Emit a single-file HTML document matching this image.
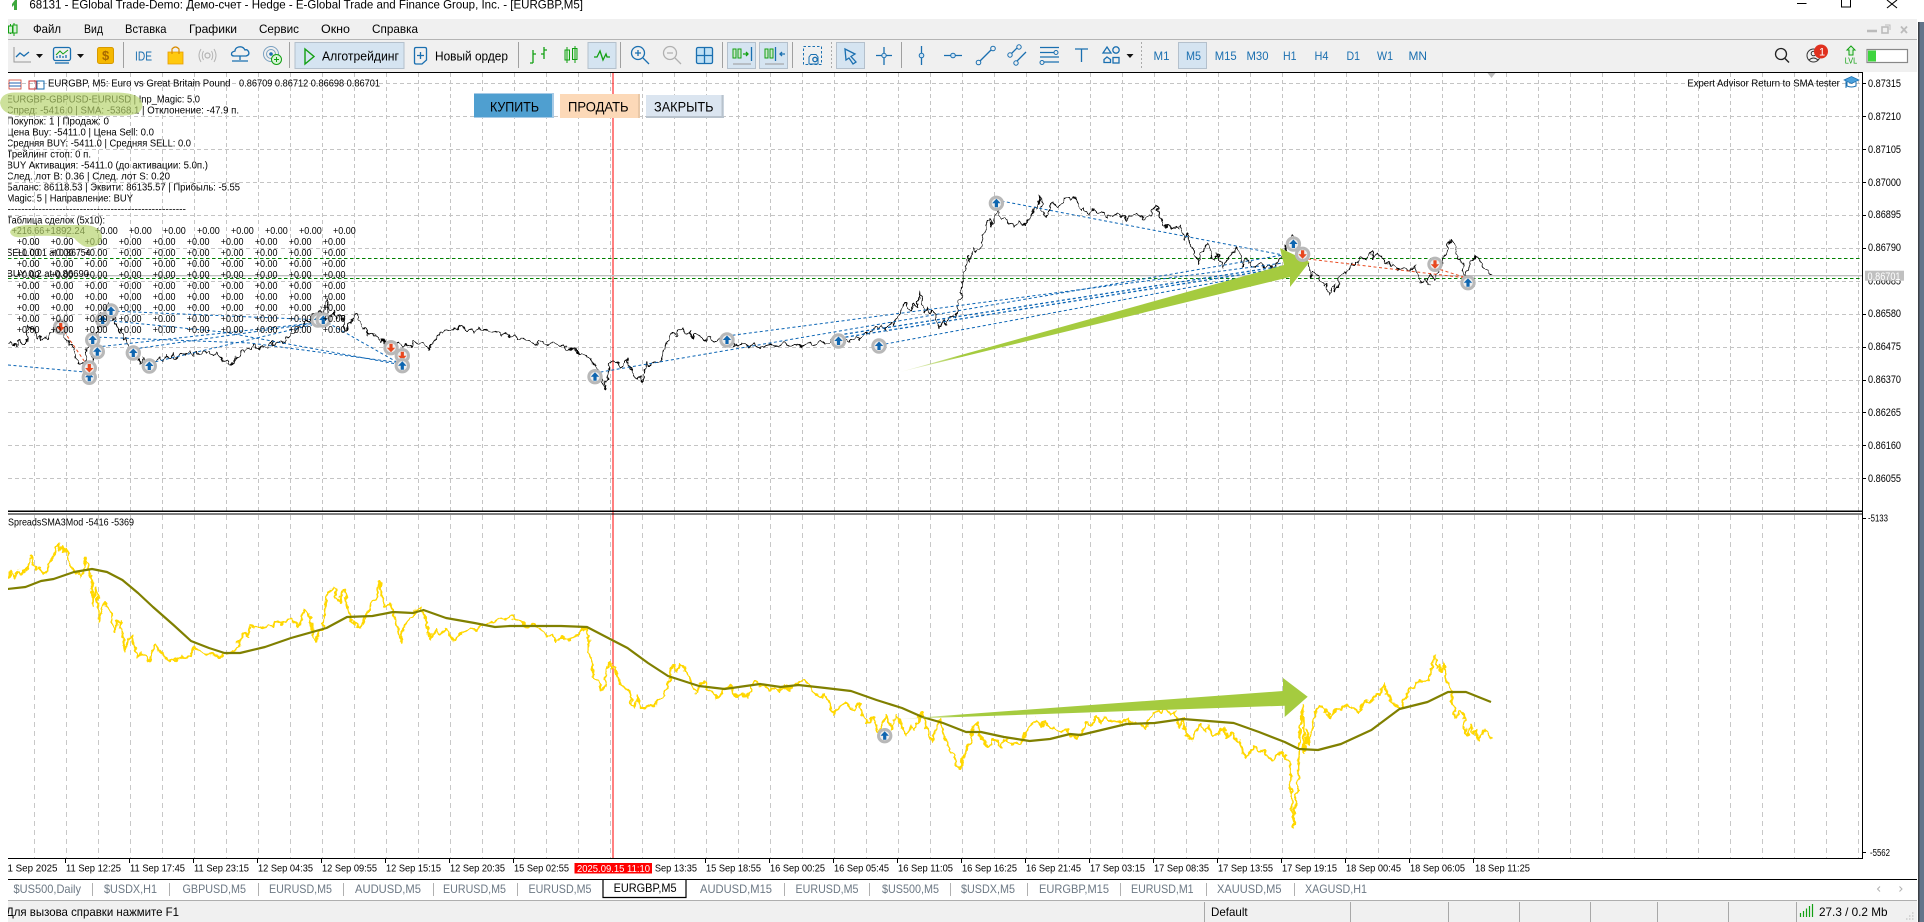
<!DOCTYPE html>
<html lang="ru"><head><meta charset="utf-8"><title>EURGBP,M5</title>
<style>
html,body{margin:0;padding:0;background:#fff;overflow:hidden}
svg{display:block}
text{font-family:"Liberation Sans","Noto Sans CJK SC",sans-serif;fill:#000}
.m text{font-size:12px}
.b text{font-size:12px;fill:#1a6fb0}
.o text{font-size:10px}
.t text{font-size:10px}
.tab text{font-size:12px;fill:#6c7884}
.ax text{font-size:11px}
.i{fill:none;stroke:#1a6fb0;stroke-width:1.3}
.g{fill:none;stroke:#12a012;stroke-width:1.3}
</style></head><body>
<svg width="1924" height="922" viewBox="0 0 1924 922" xmlns="http://www.w3.org/2000/svg">
<defs>
<pattern id="g1" x="34" y="73" width="32" height="7" patternUnits="userSpaceOnUse"><rect x="0" y="0" width="1" height="4" fill="#c4c4c4"/></pattern>
<pattern id="g2" x="34" y="515" width="32" height="9" patternUnits="userSpaceOnUse"><rect x="0" y="0" width="1" height="5" fill="#c8c8c8"/></pattern>
<clipPath id="cc"><rect x="8" y="72" width="1854" height="786"/></clipPath>
<clipPath id="cs"><rect x="8" y="900" width="400" height="22"/></clipPath>
<filter id="jit" filterUnits="userSpaceOnUse" x="0" y="70" width="1870" height="800" color-interpolation-filters="sRGB"><feTurbulence type="fractalNoise" baseFrequency=".16" numOctaves="2" seed="7" result="n"/><feDisplacementMap in="SourceGraphic" in2="n" scale="7" xChannelSelector="R" yChannelSelector="G"/></filter>
<linearGradient id="a1" gradientUnits="userSpaceOnUse" x1="900" y1="372" x2="960" y2="355"><stop offset="0" stop-color="#a5cb3f" stop-opacity=".1"/><stop offset="1" stop-color="#a5cb3f"/></linearGradient>
<linearGradient id="a2" gradientUnits="userSpaceOnUse" x1="899" y1="719" x2="960" y2="715"><stop offset="0" stop-color="#a5cb3f" stop-opacity=".1"/><stop offset="1" stop-color="#a5cb3f"/></linearGradient>
<g id="bm"><circle r="6.2" fill="#eee" stroke="#b8b8b8" stroke-width="3"/><path d="M0-4.5L4.2 0H1.6V4H-1.6V0H-4.2Z" fill="#0f66b0"/></g>
<g id="rm"><circle r="6.2" fill="#eee" stroke="#b8b8b8" stroke-width="3"/><path d="M0 4.5L4.2 0H1.6V-4H-1.6V0H-4.2Z" fill="#e8481f"/></g>
</defs>
<rect width="1924" height="922" fill="#fff"/>
<rect x="1918" y="22" width="6" height="900" fill="#63748a"/><rect x="1918" y="22" width="1.5" height="900" fill="#3b3f45"/>
<path d="M17 0V10H14V5L12 7V4L15 0Z" fill="#3da83d"/>
<text x="29.4" y="8.5" font-size="12" textLength="553.6" lengthAdjust="spacingAndGlyphs">68131 - EGlobal Trade-Demo: Демо-счет - Hedge - E-Global Trade and Finance Group, Inc. - [EURGBP,M5]</text>
<path d="M1797 3.5H1806.5" stroke="#000" fill="none"/>
<rect x="1841.5" y="-1" width="9" height="8" fill="none" stroke="#000"/>
<path d="M1887 0L1897 8M1897 0L1887 8" stroke="#000" stroke-width="1.1" fill="none"/>
<rect x="8" y="19" width="1909" height="53" fill="#f0f0f0"/>
<rect x="8" y="39" width="1909" height="1" fill="#b4b4b4"/>
<path d="M10.5 24V34M14 23V36M10.5 25.5" stroke="#12a012" fill="none"/>
<rect x="8.5" y="26" width="4" height="7" fill="#d8f0d8" stroke="#12a012"/><rect x="13" y="25" width="4" height="8" fill="#d8f0d8" stroke="#12a012"/>
<g class="m">
<text x="33" y="33" textLength="28" lengthAdjust="spacingAndGlyphs">Файл</text>
<text x="84" y="33" textLength="19" lengthAdjust="spacingAndGlyphs">Вид</text>
<text x="125" y="33" textLength="41.5" lengthAdjust="spacingAndGlyphs">Вставка</text>
<text x="189" y="33" textLength="48" lengthAdjust="spacingAndGlyphs">Графики</text>
<text x="259" y="33" textLength="40" lengthAdjust="spacingAndGlyphs">Сервис</text>
<text x="321" y="33" textLength="29" lengthAdjust="spacingAndGlyphs">Окно</text>
<text x="372" y="33" textLength="46" lengthAdjust="spacingAndGlyphs">Справка</text>
</g>
<path d="M1867 31H1877" stroke="#bbb" stroke-width="2.5"/><rect x="1882" y="27" width="6" height="6" fill="none" stroke="#bbb" stroke-width="1.6"/><path d="M1885 25H1890V30" stroke="#bbb" fill="none"/>
<path d="M1901 26.5L1907 33M1907 26.5L1901 33" stroke="#bbb" stroke-width="1.8"/>
<g fill="#d5e4f1" stroke="#b4c0cc">
<rect x="295" y="42.5" width="109" height="26"/><rect x="588" y="42.5" width="28" height="26"/><rect x="727.5" y="42.5" width="28" height="26"/><rect x="759.5" y="42.5" width="28" height="26"/><rect x="836.5" y="42.5" width="28" height="26"/><rect x="1178.5" y="42.5" width="28" height="26"/>
</g>
<path d="M123.5 42V68M289.5 42V68M518.5 42V68M620.5 42V68M722.5 42V68M792.5 42V68M901.5 42V68" stroke="#a0a0a0" fill="none"/>
<path d="M831.5 42V68M1141.5 42V68" stroke="#aaa" stroke-dasharray="2 2" fill="none"/>
<path d="M14 47V62H31" fill="none" stroke="#999"/><path d="M16 57L20 53L24 56L29 52" class="i"/>
<path d="M36 54H43L39.5 58Z" fill="#111"/>
<rect x="53.5" y="47.5" width="17" height="13" rx="2" class="i"/><path d="M56 55L60 51L63 54L68 50" stroke="#12a012" fill="none"/><path d="M57 58V56M60 58V55M63 58V56M66 58V55" class="i" stroke-width="1"/><path d="M55 63H69" class="i"/>
<path d="M77 54H84L80.5 58Z" fill="#111"/>
<rect x="97.5" y="47.5" width="16" height="16" rx="2" fill="#f5b800" stroke="#d89a00"/>
<text x="102" y="60" font-size="13" font-weight="bold" style="fill:#a86a00">$</text>
<text x="135" y="60.5" font-size="13" textLength="17" lengthAdjust="spacingAndGlyphs" style="fill:#1a6fb0">IDE</text>
<path d="M168 52H183V64H168Z" fill="#ffc90e" stroke="#e69a00" stroke-width=".8"/><path d="M172 54V49Q175.5 45 179 49V54" fill="none" stroke="#d98c00" stroke-width="1.2"/>
<circle cx="207.5" cy="55.5" r="2.5" fill="none" stroke="#b5b5b5" stroke-width="1.2"/><path d="M203.5 51Q201 55.5 203.5 60M211.5 51Q214 55.5 211.5 60M201 49Q197 55.5 201 62M214 49Q218 55.5 214 62" fill="none" stroke="#b5b5b5"/>
<path d="M234 56H246Q250 55 248.5 51.5Q247 49 245 50Q243 46 238.5 47Q235 48 235 51Q231 52 231.5 54.5Q232 56 234 56ZM240 56V60M232 61H248" class="i"/>
<circle cx="271" cy="54" r="7.5" fill="none" stroke="#7aa0c0"/><circle cx="271" cy="54" r="4.5" fill="none" stroke="#7aa0c0"/><circle cx="271" cy="54" r="1.8" fill="#1a6fb0"/>
<circle cx="276.5" cy="59.5" r="5" fill="#d8f3d8" stroke="#12a012"/><path d="M274 59.5H279M276.5 57V62" stroke="#12a012"/>
<path d="M305 49V64L314 56.5Z" fill="none" stroke="#12a012" stroke-width="1.4"/>
<text x="322" y="60.5" font-size="12.5" textLength="77" lengthAdjust="spacingAndGlyphs">Алготрейдинг</text>
<path d="M414.5 49Q414.5 47.5 416 47.5H425Q426.5 47.5 426.5 49V60L422 64H416Q414.5 64 414.5 62.5Z" class="i"/><path d="M417 55.5H424M420.5 52V59" class="i"/>
<text x="435" y="60.5" font-size="12.5" textLength="73" lengthAdjust="spacingAndGlyphs">Новый ордер</text>
<path d="M533 50V63M533 54H536M533 63H530M544 47V59M544 50H547M544 54H541" class="g"/>
<rect x="565" y="50" width="4.5" height="10" fill="#d8f0d8" stroke="#12a012"/><rect x="572.5" y="48.5" width="4.5" height="11" fill="#d8f0d8" stroke="#12a012"/><path d="M567 47V63M575 46V63" stroke="#12a012" fill="none"/>
<path d="M594 57H597L600 51L603 60L606 54L607 57H610" class="g"/>
<circle cx="638" cy="53" r="6.5" class="i"/><path d="M635 53H641M638 50V56M643 58L649 64" class="i"/>
<circle cx="670" cy="53" r="6.5" fill="none" stroke="#b0b0b0" stroke-width="1.3"/><path d="M667 53H673M675 58L681 64" fill="none" stroke="#b0b0b0" stroke-width="1.3"/>
<rect x="696.5" y="47.5" width="16" height="16" rx="1.5" fill="#bfe0f5" stroke="#1a6fb0" stroke-width="1.3"/><path d="M704.5 47.5V63.5M696.5 55.5H712.5" class="i"/>
<rect x="733" y="49" width="3" height="9" fill="#cde8cd" stroke="#12a012"/><rect x="738" y="49" width="3" height="9" fill="#cde8cd" stroke="#12a012"/><path d="M743 54H748M746 52L748 54L746 56" class="g" stroke-width="1"/><path d="M751.5 47V61" class="i"/><path d="M733 64H751" stroke="#999" fill="none"/>
<rect x="765" y="49" width="3" height="9" fill="#cde8cd" stroke="#12a012"/><rect x="770" y="49" width="3" height="9" fill="#cde8cd" stroke="#12a012"/><path d="M775.5 47V61M785 54H780M782 52L780 54L782 56" class="i" stroke-width="1"/><path d="M765 64H784" stroke="#999" fill="none"/>
<rect x="803.5" y="46.5" width="18" height="18" fill="none" stroke="#1a6fb0" stroke-dasharray="2.5 2"/><path d="M809 64V57L811 54.5H816L818 57V64Z" fill="#f0f0f0" stroke="#1a6fb0"/><circle cx="815" cy="59.5" r="2.2" class="i" stroke-width="1"/>
<path d="M845 49L855 54L851 56.5L856 62L853 64L849 58L846 60Z" class="i" fill="#e8f2fa"/>
<path d="M884 47V65M876 55.5H892" class="i"/><circle cx="884" cy="55.5" r="2.2" fill="#d5e4f1" stroke="#1a6fb0"/>
<path d="M921.5 46V65" class="i"/><circle cx="921.5" cy="55.5" r="2.3" fill="#cfe4f6" stroke="#1a6fb0"/>
<path d="M944 55.5H962" class="i"/><circle cx="953" cy="55.5" r="2.3" fill="#cfe4f6" stroke="#1a6fb0"/>
<path d="M979 62L992 49" class="i"/><circle cx="978.5" cy="62.5" r="2.3" fill="#f0f0f0" stroke="#1a6fb0"/><circle cx="993" cy="48.5" r="2.3" fill="#f0f0f0" stroke="#1a6fb0"/>
<path d="M1011 54L1018 47M1016 62L1026 52" class="i"/><circle cx="1010" cy="55" r="2.2" fill="#f0f0f0" stroke="#1a6fb0"/><circle cx="1019" cy="47" r="2.2" fill="#f0f0f0" stroke="#1a6fb0"/><circle cx="1016" cy="63" r="2.2" fill="#f0f0f0" stroke="#1a6fb0"/>
<path d="M1040 47.5H1059M1040 52.5H1054M1040 57H1059M1043 62H1059" class="i"/><circle cx="1056" cy="52.5" r="2" fill="#f0f0f0" stroke="#1a6fb0"/><circle cx="1042" cy="62.5" r="2" fill="#f0f0f0" stroke="#1a6fb0"/>
<path d="M1075 49H1088M1081.5 49V62" class="i"/>
<path d="M1107 47L1111 53H1103Z" class="i" stroke-width="1"/><circle cx="1116" cy="50" r="3.2" class="i" stroke-width="1"/><path d="M1107 57L1110.5 59.5V62.5H1104V59.5Z" class="i" stroke-width="1"/><rect x="1113" y="57.5" width="6" height="5.5" class="i" stroke-width="1"/>
<path d="M1126.5 54H1133.5L1130 58Z" fill="#111"/>
<g class="b">
<text x="1153.5" y="60" textLength="16" lengthAdjust="spacingAndGlyphs">M1</text>
<text x="1186" y="60" textLength="15" lengthAdjust="spacingAndGlyphs">M5</text>
<text x="1214.7" y="60" textLength="22" lengthAdjust="spacingAndGlyphs">M15</text>
<text x="1246.5" y="60" textLength="22" lengthAdjust="spacingAndGlyphs">M30</text>
<text x="1283" y="60" textLength="13.5" lengthAdjust="spacingAndGlyphs">H1</text>
<text x="1314.5" y="60" textLength="14" lengthAdjust="spacingAndGlyphs">H4</text>
<text x="1346.5" y="60" textLength="13.5" lengthAdjust="spacingAndGlyphs">D1</text>
<text x="1377" y="60" textLength="16" lengthAdjust="spacingAndGlyphs">W1</text>
<text x="1408.5" y="60" textLength="18.5" lengthAdjust="spacingAndGlyphs">MN</text>
</g>
<circle cx="1781" cy="54" r="5.5" fill="none" stroke="#222" stroke-width="1.3"/><path d="M1785 58.5L1789 62.5" stroke="#222" stroke-width="1.4"/>
<circle cx="1813.5" cy="55.5" r="6.5" fill="none" stroke="#333"/><circle cx="1813.5" cy="53.5" r="2.3" fill="none" stroke="#333"/><path d="M1809 60Q1813.5 56 1818 60" fill="none" stroke="#333"/>
<circle cx="1821" cy="51.5" r="7" fill="#e0301e"/><text x="1819" y="55.5" font-size="11" style="fill:#fff">1</text>
<path d="M1851 46L1855 50H1853V55H1849V50H1847Z" fill="#d8f3d8" stroke="#12a012"/>
<text x="1844.7" y="63.5" font-size="8.5" textLength="12.5" lengthAdjust="spacingAndGlyphs" style="fill:#12a012">LVL</text>
<rect x="1867" y="49.5" width="40.5" height="13" fill="#fff" stroke="#888" stroke-width="1.2"/><rect x="1868" y="50.5" width="8" height="11" fill="#3ed43e"/>
<rect x="8" y="72" width="1909" height="807" fill="#fff"/>
<rect x="8" y="73" width="1854" height="438" fill="url(#g1)"/>
<rect x="8" y="514" width="1854" height="344" fill="url(#g2)"/>
<path d="M8 83.5H1862M8 116.5H1862M8 149.5H1862M8 182.5H1862M8 215.5H1862M8 248.5H1862M8 281.5H1862M8 314.5H1862M8 347.5H1862M8 380.5H1862M8 412.5H1862M8 445.5H1862M8 478.5H1862" stroke="#c4c4c4" stroke-dasharray="4 3" fill="none"/>
<rect x="612.5" y="72" width="1" height="786" fill="#f00"/>
<path d="M8 275.7H1862" stroke="#c0c0c0" stroke-width="1.4" fill="none"/>
<path d="M8 258.5H1862M8 278.5H1862" stroke="#008000" stroke-width="1.1" stroke-dasharray="3.5 2.5" fill="none"/>
<g clip-path="url(#cc)">
<path filter="url(#jit)" fill="none" stroke="#000" stroke-width="1" stroke-linejoin="round" d="M8 344L11 342 13 345 15 342 17 345 20 341 22 345 26 344 27 335 29 325 31 329 33 327 35 334 38 339 41 336 43 341 46 336 48 338 50 333 53 331 55 327 58 328 61 331 64 336 67 338 70 346 72 344 75 353 77 362 80 364 83 363 84 372 86 355 88 340 90 333 91 345 92 366 94 345 96 338 98 332 100 313 102 325 104 316 106 310 108 302 109 312 111 308 113 320 115 315 118 330 120 333 122 328 124 340 126 338 128 343 130 349 132 352 134 350 136 358 138 360 140 364 143 358 146 362 150 363 153 360 156 362 160 357 163 361 166 356 170 358 173 355 176 359 180 352 184 356 187 353 190 351 193 356 197 350 200 354 203 352 207 354 210 351 213 355 217 354 220 357 224 361 227 362 230 365 233 362 236 358 240 357 243 350 245 352 247 347 250 349 254 345 258 350 262 346 267 348 271 342 275 345 280 340 284 342 287 337 291 332 295 334 299 326 303 328 307 320 310 323 314 314 317 316 320 308 323 315 325 304 327 297 329 308 330 317 334 312 337 319 340 314 343 317 345 328 347 330 350 320 354 315 357 313 360 322 363 330 366 327 369 335 372 333 377 337 380 342 383 339 386 344 390 347 393 343 396 345 399 342 402 348 405 344 408 343 411 348 414 341 417 345 422 342 425 346 429 350 432 344 436 338 440 332 443 334 446 329 450 331 454 327 458 330 462 326 467 331 471 329 475 333 479 328 483 331 488 330 492 333 497 331 501 335 505 333 510 337 514 336 518 340 523 338 527 340 532 341 537 344 542 342 548 345 554 343 559 346 564 345 568 350 573 348 576 350 580 354 584 354 589 358 592 362 595 366 598 372 601 378 603 380 605 390 607 378 609 365 612 360 615 364 618 362 620 368 623 367 625 360 627 358 630 368 632 372 634 375 637 379 640 376 643 382 645 370 647 363 650 366 654 361 658 364 661 360 664 352 667 343 669 341 672 333 675 336 678 330 683 328 686 334 690 331 693 338 696 333 700 336 705 340 710 337 715 341 720 338 725 342 730 340 736 345 742 343 748 347 754 344 760 348 766 345 772 344 778 347 784 343 790 346 796 344 802 347 808 343 814 345 820 341 826 344 832 340 838 343 844 338 850 342 856 337 860 339 866 333 870 336 875 327 878 330 882 325 886 331 890 322 894 325 897 318 900 315 904 302 907 306 911 310 914 303 917 308 920 291 922 305 924 313 927 307 930 314 932.5 310 935 318 938 322 940 328 943 320 946 326 949 317 953 315 956 318 958 305 961 297 963 280 965 267 968 255 970 262 973 248 976 252 980 248 983 240 986 225 989 217 992 226 994 220 996 212 998 210 1001 218 1005 218 1008 223 1012 222 1015 227 1018 221 1021 224 1024 225 1027 220 1030 218 1034 207 1037 210 1040 195 1042 208 1045 217 1048 212 1050 205 1052 201 1055 205 1059 208 1062 203 1065 199 1068 197 1071 199 1074 196 1076 200 1079 207 1082 212 1085 209 1088 214 1092 209 1095 212 1099 214 1103 212 1107 218 1110 214 1113 216 1116 213 1120 216 1123 215 1126 220 1130 216 1134 214 1137 213 1141 217 1145 220 1148 214 1151 216 1154 208 1156 205 1158 212 1161 218 1164 228 1168 224 1171 230 1175 226 1178 229 1181 225 1183 235 1185 240 1188 232 1190 245 1193 248 1195 255 1198 263 1201 254 1204 248 1207 245 1210 252 1212 257 1215 260 1218 254 1221 262 1223 268 1226 262 1229 257 1232 253 1235 250 1237 248 1240 256 1242 267 1244 262 1246 257 1249 264 1252 260 1254 268 1256 267 1260 262 1264 268 1268 264 1272 270 1276 266 1279 260 1283 255 1286 250 1289 240 1293 235 1296 245 1300 252 1305 258 1309 263 1311 278 1314 270 1317 273 1319 279 1321 282 1324 286 1327 282 1329 297 1332 290 1334 285 1336 292 1338 283 1340 277 1344 272 1347 273 1350 268 1355 262 1358 264 1361 258 1365 262 1368 256 1371 252 1374 258 1377 252 1382 258 1386 262 1390 265 1393 263 1397 268 1402 270 1406 268 1410 270 1415 267 1418 275 1422 283 1425 278 1428 285 1430 273 1434 280 1437 272 1440 270 1443 260 1446 250 1451 240 1454 245 1457 252 1460 260 1463 265 1466 277 1470 265 1473 258 1476 255 1479 258 1482 265 1485 268 1488 272 1492 275"/>
<g fill="none" stroke="#0a64b4" stroke-width="1" stroke-dasharray="3 2.5">
<path d="M8 365L85 372"/><path d="M111 311L323 320"/><path d="M323 320L402 365"/><path d="M103 320L223 332L402 365"/><path d="M93 337L250 343L402 363"/><path d="M97 347L323 322"/><path d="M134 349L323 322"/><path d="M150 363L312 325"/>
<path d="M595 373L1283 255"/><path d="M727 336L1283 263"/><path d="M839 335L1283 266" stroke-width="1.3"/><path d="M840 338L1283 268" stroke-width="1.3"/><path d="M880 345L1283 270"/><path d="M996 200L1283 255"/>
</g>
<g fill="none" stroke="#e84c22" stroke-width="1" stroke-dasharray="3 2.5">
<path d="M61 327L89 368"/><path d="M391 342L402 355"/><path d="M1308 259L1467 278"/><path d="M1435 268L1467 278"/>
</g>
<path filter="url(#jit)" fill="none" stroke="#ffd700" stroke-width="2" stroke-linejoin="round" d="M7.6 580L12.7 571.7 15 577 18 570 21 575 25.5 570 28 565 31.6 555 34 564 36.7 570 40 568 43 574 46 573 48 566 51 560 54 556 56 548 58.7 543 60 550 62 545 64 553 66 550 69 560 72 565 74 573 78 572 81.6 578 83 570 85.7 558 88 568 92 577 93 607 95 592 97 588 99.5 622 102 610 104.6 603 107 606 110 610 113 625 115 632 118 622 120 620 123 640 125 652 128 640 131.6 637 135 648 138 657 142 653 146 657 150.5 662 153 650 155.6 645 160 652 164 656 168 660 174 661 180 657 185 658 189 657 194 647 198 650 204 655 210 653 217 657 224 654 230 653 235 650 240 640 245 633 248 637 250 625 253 628 255 627 262 628 268 625 272 627 275.5 622 281 624 285 621 291 620 295 624 298.5 627 302 618 304.6 608 308 612 311 617 313 635 315 643 319 632 322.4 630 325 610 326.5 595 330 590 334 587 337 598 339 603 342 592 344 590 347 605 349.5 617 353 622 357 624 360 628 364 620 368 612 372.4 603 376 600 380 582 382.7 603 386 606 390 604 393 610 397 625 400.5 642 403 630 405.6 623 410 618 415 612 421 607 425 618 428 632 431 638 436 630 440 634 446 630 450 636 454 640 460 636 465 631 469.4 628 475 630 480 626 490 623 495 621 500 618 505 620 510 615 515 619 520 622 527 626 534 625 541 630 547 636 551 634 556 642 562 637 568 640 574 637 579 635 582 628 587 630 590 655 592 668 594 677 598 680 601 690 604.6 687 607 668 609.7 662 612 668 615 667 618 678 620 683 625 688 630 693 632 705 635 707 638 696 641 708 645 708 650 705 654 706 658 700 664 695 668 687 671 670 673.5 665 677 672 680 664 684 667 687 672 689 677 693 690 696.4 693 700 685 704 680 708 690 713 692 716 698 719.4 697 724 690 729.6 685 733 692 738 696 742 693 747.4 698 751 688 755 680 759 686 763 684 769 690 775.5 688 780 691 784 686 790 689 794 684 798.5 683 803 680 807.6 682 812 690 818 695 822 698 825 694 828 700 831 708 833 715 837 708 842 704 846 702 850 708 853.6 710 856 706 858.7 703 862 712 866 722 870 720 874 718 877 728 879 735 883 724 886.7 715 889 722 892 728 895 719 897 715 901 724 904 733 907 735 911 726 915 730 918 720 922.4 712 926 725 929 736 932.6 742 936 728 940 720 943 732 947 745 950.5 752 954 755 957 765 960.7 768 963 758 968 747 971 740 974 726 976 723 980 735 984 742 988.8 747 992 740 996.4 740 999 745 1001.5 747 1006 738 1010 745 1015 742 1019.4 745 1024 738 1030 726 1037 720 1041 727 1045 722 1050 729 1055 727 1060 733 1066 729 1072 736 1078 738 1082 732 1086 722 1092 725 1096 715 1101 722 1106 717 1110 722 1116 720 1122 722 1128 719 1132 724 1136.7 722 1141 725 1147 728 1150 718 1154 714 1157 710 1161 714 1165 708 1170 714 1175 712 1178 722 1180 728 1183 718 1186 735 1190 738 1193 740 1197 730 1200.5 723 1204 732 1208 726 1213 736 1218 733 1223 728 1227 738 1232 733 1239 743 1242 748 1246 758 1250 752 1253 748 1256.6 747 1260 752 1264 750 1268 758 1272 762 1276 756 1282 753 1286 756 1290 762 1291 790 1292.4 813 1293.3 828 1295 805 1297.4 790 1300 730 1302.6 706 1304 740 1305 752 1307 730 1308 745 1310 737 1313 725 1316 712 1320.4 705 1324 712 1327 710 1330.6 718 1335 710 1340 711 1346 703 1350 709 1354 707 1358.7 713 1362 706 1366 700 1371 702 1376 695 1380 695 1384 685 1388 695 1391 700 1394.4 705 1398 708 1402 708 1406 695 1410 688 1414 690 1417 682 1422 681 1427 682 1430 678 1432 665 1435 655 1437 668 1440 664 1442 672 1444 663 1447 680 1450.5 690 1453 705 1455.6 718 1458 712 1460.7 710 1464 720 1466 733 1468 735 1470 725 1473 733 1476 730 1478.6 740 1482 732 1486 730 1489 735 1492.4 740"/>
<path fill="none" stroke="#808000" stroke-width="2.2" stroke-linejoin="round" d="M7.6 589L25.5 587 41 581 53.6 579 74 572 92 569 107 572 122.4 580 138 593 153 607 173.5 625 191 641 209 648 224.5 653 240 653 265 647 291 638 326.5 628 347 617 372.4 616 393 612 413 613 423.5 610 446 618 474.5 623 495 627 510 626 561 626 587 627 612 640 627.5 648 648 663 668 676 699 686 724.5 689 760 684 780.6 687 798.5 685 825.5 688 851 691 876.5 700 902 708 922.4 717 943 723 966 732 981 732 1004 737 1029.6 741 1050 739 1070 734 1080.6 735 1126.5 724 1154.6 723 1182.7 719 1233.7 723 1259 732 1284.7 742 1299 749 1318 750 1341 744 1371.4 730 1399.5 709 1427.5 702 1448 692 1466 692 1491 702"/>
<path d="M900 372L1284 265L1280 248L1309.5 262L1290 287L1290 277Z" fill="url(#a1)"/>
<path d="M899.5 719L1283 691L1283 678L1307.7 696.7L1284.7 717L1284.7 705.7Z" fill="url(#a2)"/>
<use href="#bm" x="89.3" y="377.3"/><use href="#rm" x="89.3" y="368"/><use href="#rm" x="60.7" y="327"/>
<use href="#bm" x="92.7" y="340"/><use href="#bm" x="97.3" y="351.7"/><use href="#bm" x="102.7" y="320"/><use href="#bm" x="111" y="311"/>
<use href="#bm" x="133.3" y="353"/><use href="#bm" x="149.3" y="366"/><use href="#bm" x="318" y="320"/><use href="#bm" x="323.3" y="320"/>
<use href="#rm" x="391" y="347.7"/><use href="#rm" x="402.3" y="355.7"/><use href="#bm" x="402.3" y="365.7"/>
<use href="#bm" x="595" y="376.7"/><use href="#bm" x="727" y="340"/><use href="#bm" x="838.5" y="341"/><use href="#bm" x="879" y="346"/>
<use href="#bm" x="996.4" y="203.3"/><use href="#bm" x="1293.4" y="244"/><use href="#rm" x="1302.6" y="254.3"/><use href="#rm" x="1435" y="264.3"/><use href="#bm" x="1468" y="282.7"/>
<use href="#bm" x="884.7" y="735.7"/>
<rect x="9" y="80" width="12" height="9" fill="#fff" stroke="#d04030" stroke-width=".8"/><path d="M9 83H21M9 86H21" stroke="#2060b0" fill="none"/>
<path d="M29 81H36V89H29Z" fill="none" stroke="#d03030"/><path d="M37 81H44V89H37Z" fill="none" stroke="#1a6fb0"/>
<text x="48" y="86.5" font-size="10" textLength="182.5" lengthAdjust="spacingAndGlyphs">EURGBP, M5: Euro vs Great Britain Pound</text>
<text x="239" y="86.5" font-size="10" textLength="141" lengthAdjust="spacingAndGlyphs">0.86709 0.86712 0.86698 0.86701</text>
<text x="1687.4" y="86.5" font-size="10.5" textLength="152.4" lengthAdjust="spacingAndGlyphs">Expert Advisor Return to SMA tester</text>
<path d="M1844 80L1851.5 76.5L1859 80L1851.5 83.5Z" fill="#4aa0dc" stroke="#1a6fb0" stroke-width=".7"/><path d="M1847 82V86Q1851.5 88 1856 86V82M1846 81V88" fill="none" stroke="#1a6fb0"/>
<path d="M1487.5 73H1495.5L1491.5 78Z" fill="#bcbcbc"/>
<g class="o">
<text x="6.5" y="102.3" textLength="193.5" lengthAdjust="spacingAndGlyphs">EURGBP-GBPUSD-EURUSD | Inp_Magic: 5.0</text>
<text x="6.5" y="113.5" textLength="232.5" lengthAdjust="spacingAndGlyphs">Спред: -5416.0 | SMA: -5368.1 | Отклонение: -47.9 п.</text>
<text x="6.5" y="124.3" textLength="102.5" lengthAdjust="spacingAndGlyphs">Покупок: 1 | Продаж: 0</text>
<text x="6.5" y="135.3" textLength="147.5" lengthAdjust="spacingAndGlyphs">Цена Buy: -5411.0 | Цена Sell: 0.0</text>
<text x="6.5" y="146.3" textLength="184.5" lengthAdjust="spacingAndGlyphs">Средняя BUY: -5411.0 | Средняя SELL: 0.0</text>
<text x="6.5" y="157.3" textLength="84.5" lengthAdjust="spacingAndGlyphs">Трейлинг стоп: 0 п.</text>
<text x="6.5" y="168.3" textLength="201.5" lengthAdjust="spacingAndGlyphs">BUY Активация: -5411.0 (до активации: 5.0п.)</text>
<text x="6.5" y="179.3" textLength="163.5" lengthAdjust="spacingAndGlyphs">След. лот B: 0.36 | След. лот S: 0.20</text>
<text x="6.5" y="190.3" textLength="233.5" lengthAdjust="spacingAndGlyphs">Баланс: 86118.53 | Эквити: 86135.57 | Прибыль: -5.55</text>
<text x="6.5" y="201.3" textLength="126.5" lengthAdjust="spacingAndGlyphs">Magic: 5 | Направление: BUY</text>
<text x="7.5" y="212.3" textLength="178.5" lengthAdjust="spacingAndGlyphs">----------------------------------------------------</text>
<text x="6.5" y="223.6" textLength="98.5" lengthAdjust="spacingAndGlyphs">Таблица сделок (5x10):</text>
<text x="11.7" y="234" textLength="32.5" lengthAdjust="spacingAndGlyphs">+216.66</text>
<text x="45" y="234" textLength="40" lengthAdjust="spacingAndGlyphs">+1892.24</text>
<text x="6.5" y="256" textLength="84" lengthAdjust="spacingAndGlyphs">SELL 0.01 at 0.86754</text>
<text x="6.5" y="277" textLength="82.5" lengthAdjust="spacingAndGlyphs">BUY 0.2 at 0.86690</text>
</g>
<g class="t" transform="scale(.9 1)">
<text y="234"><tspan x="105.6">+0.00</tspan><tspan x="143.3">+0.00</tspan><tspan x="181.1">+0.00</tspan><tspan x="218.9">+0.00</tspan><tspan x="256.7">+0.00</tspan><tspan x="294.5">+0.00</tspan><tspan x="332.3">+0.00</tspan><tspan x="370">+0.00</tspan></text>
<text y="245"><tspan x="18.6">+0.00</tspan><tspan x="56.3">+0.00</tspan><tspan x="94.1">+0.00</tspan><tspan x="131.9">+0.00</tspan><tspan x="169.7">+0.00</tspan><tspan x="207.5">+0.00</tspan><tspan x="245.3">+0.00</tspan><tspan x="283.1">+0.00</tspan><tspan x="320.8">+0.00</tspan><tspan x="358.6">+0.00</tspan></text>
<text y="256"><tspan x="18.6">+0.00</tspan><tspan x="56.3">+0.00</tspan><tspan x="94.1">+0.00</tspan><tspan x="131.9">+0.00</tspan><tspan x="169.7">+0.00</tspan><tspan x="207.5">+0.00</tspan><tspan x="245.3">+0.00</tspan><tspan x="283.1">+0.00</tspan><tspan x="320.8">+0.00</tspan><tspan x="358.6">+0.00</tspan></text>
<text y="267"><tspan x="18.6">+0.00</tspan><tspan x="56.3">+0.00</tspan><tspan x="94.1">+0.00</tspan><tspan x="131.9">+0.00</tspan><tspan x="169.7">+0.00</tspan><tspan x="207.5">+0.00</tspan><tspan x="245.3">+0.00</tspan><tspan x="283.1">+0.00</tspan><tspan x="320.8">+0.00</tspan><tspan x="358.6">+0.00</tspan></text>
<text y="278"><tspan x="18.6">+0.00</tspan><tspan x="56.3">+0.00</tspan><tspan x="94.1">+0.00</tspan><tspan x="131.9">+0.00</tspan><tspan x="169.7">+0.00</tspan><tspan x="207.5">+0.00</tspan><tspan x="245.3">+0.00</tspan><tspan x="283.1">+0.00</tspan><tspan x="320.8">+0.00</tspan><tspan x="358.6">+0.00</tspan></text>
<text y="289"><tspan x="18.6">+0.00</tspan><tspan x="56.3">+0.00</tspan><tspan x="94.1">+0.00</tspan><tspan x="131.9">+0.00</tspan><tspan x="169.7">+0.00</tspan><tspan x="207.5">+0.00</tspan><tspan x="245.3">+0.00</tspan><tspan x="283.1">+0.00</tspan><tspan x="320.8">+0.00</tspan><tspan x="358.6">+0.00</tspan></text>
<text y="300"><tspan x="18.6">+0.00</tspan><tspan x="56.3">+0.00</tspan><tspan x="94.1">+0.00</tspan><tspan x="131.9">+0.00</tspan><tspan x="169.7">+0.00</tspan><tspan x="207.5">+0.00</tspan><tspan x="245.3">+0.00</tspan><tspan x="283.1">+0.00</tspan><tspan x="320.8">+0.00</tspan><tspan x="358.6">+0.00</tspan></text>
<text y="311"><tspan x="18.6">+0.00</tspan><tspan x="56.3">+0.00</tspan><tspan x="94.1">+0.00</tspan><tspan x="131.9">+0.00</tspan><tspan x="169.7">+0.00</tspan><tspan x="207.5">+0.00</tspan><tspan x="245.3">+0.00</tspan><tspan x="283.1">+0.00</tspan><tspan x="320.8">+0.00</tspan><tspan x="358.6">+0.00</tspan></text>
<text y="322"><tspan x="18.6">+0.00</tspan><tspan x="56.3">+0.00</tspan><tspan x="94.1">+0.00</tspan><tspan x="131.9">+0.00</tspan><tspan x="169.7">+0.00</tspan><tspan x="207.5">+0.00</tspan><tspan x="245.3">+0.00</tspan><tspan x="283.1">+0.00</tspan><tspan x="320.8">+0.00</tspan><tspan x="358.6">+0.00</tspan></text>
<text y="333"><tspan x="18.6">+0.00</tspan><tspan x="56.3">+0.00</tspan><tspan x="94.1">+0.00</tspan><tspan x="131.9">+0.00</tspan><tspan x="169.7">+0.00</tspan><tspan x="207.5">+0.00</tspan><tspan x="245.3">+0.00</tspan><tspan x="283.1">+0.00</tspan><tspan x="320.8">+0.00</tspan><tspan x="358.6">+0.00</tspan></text>
</g>
<text x="8" y="525.5" font-size="10.5" textLength="126" lengthAdjust="spacingAndGlyphs">SpreadsSMA3Mod -5416 -5369</text>
</g>
<rect x="474" y="93" width="80" height="25" fill="#a8cbe6"/><rect x="474" y="94" width="78" height="23" fill="#4f9fd0"/>
<text x="490" y="111.5" font-size="14" textLength="49" lengthAdjust="spacingAndGlyphs">КУПИТЬ</text>
<rect x="560" y="94" width="80" height="24" fill="#fcd9b8"/><rect x="638" y="94" width="2" height="24" fill="#e8c8a8"/>
<text x="568" y="111.5" font-size="14" textLength="60.6" lengthAdjust="spacingAndGlyphs">ПРОДАТЬ</text>
<rect x="646" y="95" width="78" height="23" fill="#dbe5f0"/><path d="M722.5 95V118M646 117H724" stroke="#b8c2cc" stroke-width="2" fill="none"/>
<text x="654" y="111.5" font-size="14" textLength="59.5" lengthAdjust="spacingAndGlyphs">ЗАКРЫТЬ</text>
<path d="M0 103Q1 93 14 92.5H118Q136 93 141 100Q145 108 138 113Q130 116 118 115.5H20Q2 115 0 103Z" fill="#b5d36b" opacity=".68"/>
<path d="M10 232Q12 225 30 225H85Q100 226 102 236Q102 247 88 247Q82 247 74 238Q60 235 30 236Q12 240 10 232Z" fill="#b5d36b" opacity=".68"/>
<rect x="8" y="72" width="1855" height="1" fill="#000"/>
<rect x="1862" y="72" width="1" height="786" fill="#000"/>
<rect x="8" y="510.5" width="1855" height="1.5" fill="#000"/>
<rect x="8" y="513.5" width="1855" height="1" fill="#000"/>
<rect x="8" y="858" width="1855" height="1" fill="#000"/>
<path d="M1863 83.5H1866M1863 116.5H1866M1863 149.5H1866M1863 182.5H1866M1863 215.5H1866M1863 248.5H1866M1863 314.5H1866M1863 347.5H1866M1863 380.5H1866M1863 412.5H1866M1863 445.5H1866M1863 478.5H1866M1863 518.5H1866M1863 852.5H1866" stroke="#000" fill="none"/>
<g class="ax">
<text x="1868" y="87" textLength="33" lengthAdjust="spacingAndGlyphs">0.87315</text><text x="1868" y="120" textLength="33" lengthAdjust="spacingAndGlyphs">0.87210</text><text x="1868" y="153" textLength="33" lengthAdjust="spacingAndGlyphs">0.87105</text><text x="1868" y="186" textLength="33" lengthAdjust="spacingAndGlyphs">0.87000</text><text x="1868" y="218" textLength="33" lengthAdjust="spacingAndGlyphs">0.86895</text><text x="1868" y="251" textLength="33" lengthAdjust="spacingAndGlyphs">0.86790</text><text x="1868" y="284.5" textLength="33" lengthAdjust="spacingAndGlyphs">0.86685</text><text x="1868" y="317" textLength="33" lengthAdjust="spacingAndGlyphs">0.86580</text><text x="1868" y="350" textLength="33" lengthAdjust="spacingAndGlyphs">0.86475</text><text x="1868" y="383" textLength="33" lengthAdjust="spacingAndGlyphs">0.86370</text><text x="1868" y="416" textLength="33" lengthAdjust="spacingAndGlyphs">0.86265</text><text x="1868" y="449" textLength="33" lengthAdjust="spacingAndGlyphs">0.86160</text><text x="1868" y="482" textLength="33" lengthAdjust="spacingAndGlyphs">0.86055</text>
</g>
<rect x="1865" y="270.7" width="39" height="10" fill="#c0c0c0"/>
<text x="1867.5" y="280" font-size="11" textLength="33" lengthAdjust="spacingAndGlyphs" style="fill:#fff">0.86701</text>
<text x="1868" y="521.5" font-size="10" textLength="20" lengthAdjust="spacingAndGlyphs">-5133</text>
<text x="1870" y="856" font-size="10" textLength="20" lengthAdjust="spacingAndGlyphs">-5562</text>
<path d="M65.5 859V863M129.5 859V863M193.5 859V863M257.5 859V863M321.5 859V863M385.5 859V863M449.5 859V863M513.5 859V863M705.5 859V863M769.5 859V863M833.5 859V863M897.5 859V863M961.5 859V863M1025.5 859V863M1089.5 859V863M1153.5 859V863M1217.5 859V863M1281.5 859V863M1345.5 859V863M1409.5 859V863M1473.5 859V863" stroke="#000" fill="none"/>
<g font-size="10.5">
<text x="7.5" y="871.5" textLength="50" lengthAdjust="spacingAndGlyphs">1 Sep 2025</text>
<text x="66" y="871.5" textLength="55" lengthAdjust="spacingAndGlyphs">11 Sep 12:25</text>
<text x="130" y="871.5" textLength="55" lengthAdjust="spacingAndGlyphs">11 Sep 17:45</text>
<text x="194" y="871.5" textLength="55" lengthAdjust="spacingAndGlyphs">11 Sep 23:15</text>
<text x="258" y="871.5" textLength="55" lengthAdjust="spacingAndGlyphs">12 Sep 04:35</text>
<text x="322" y="871.5" textLength="55" lengthAdjust="spacingAndGlyphs">12 Sep 09:55</text>
<text x="386" y="871.5" textLength="55" lengthAdjust="spacingAndGlyphs">12 Sep 15:15</text>
<text x="450" y="871.5" textLength="55" lengthAdjust="spacingAndGlyphs">12 Sep 20:35</text>
<text x="514" y="871.5" textLength="55" lengthAdjust="spacingAndGlyphs">15 Sep 02:55</text>
<text x="642" y="871.5" textLength="55" lengthAdjust="spacingAndGlyphs">15 Sep 13:35</text>
<text x="706" y="871.5" textLength="55" lengthAdjust="spacingAndGlyphs">15 Sep 18:55</text>
<text x="770" y="871.5" textLength="55" lengthAdjust="spacingAndGlyphs">16 Sep 00:25</text>
<text x="834" y="871.5" textLength="55" lengthAdjust="spacingAndGlyphs">16 Sep 05:45</text>
<text x="898" y="871.5" textLength="55" lengthAdjust="spacingAndGlyphs">16 Sep 11:05</text>
<text x="962" y="871.5" textLength="55" lengthAdjust="spacingAndGlyphs">16 Sep 16:25</text>
<text x="1026" y="871.5" textLength="55" lengthAdjust="spacingAndGlyphs">16 Sep 21:45</text>
<text x="1090" y="871.5" textLength="55" lengthAdjust="spacingAndGlyphs">17 Sep 03:15</text>
<text x="1154" y="871.5" textLength="55" lengthAdjust="spacingAndGlyphs">17 Sep 08:35</text>
<text x="1218" y="871.5" textLength="55" lengthAdjust="spacingAndGlyphs">17 Sep 13:55</text>
<text x="1282" y="871.5" textLength="55" lengthAdjust="spacingAndGlyphs">17 Sep 19:15</text>
<text x="1346" y="871.5" textLength="55" lengthAdjust="spacingAndGlyphs">18 Sep 00:45</text>
<text x="1410" y="871.5" textLength="55" lengthAdjust="spacingAndGlyphs">18 Sep 06:05</text>
<text x="1475" y="871.5" textLength="55" lengthAdjust="spacingAndGlyphs">18 Sep 11:25</text>
</g>
<rect x="574.5" y="863" width="77.5" height="10.5" fill="#f00"/>
<text x="577" y="871.8" font-size="10.5" textLength="73" lengthAdjust="spacingAndGlyphs" style="fill:#fff">2025.09.15 11:10</text>
<rect x="8" y="879" width="1909" height="1" fill="#000"/>
<rect x="8" y="900" width="1909" height="1" fill="#aeaeae"/>
<path d="M603 880V897.5H686V880" fill="#fff" stroke="#000" stroke-width="1.2"/>
<g class="tab">
<text x="13.5" y="893" textLength="67.5" lengthAdjust="spacingAndGlyphs">$US500,Daily</text>
<text x="104" y="893" textLength="53" lengthAdjust="spacingAndGlyphs">$USDX,H1</text>
<text x="182.5" y="893" textLength="63.5" lengthAdjust="spacingAndGlyphs">GBPUSD,M5</text>
<text x="269" y="893" textLength="63" lengthAdjust="spacingAndGlyphs">EURUSD,M5</text>
<text x="355" y="893" textLength="66" lengthAdjust="spacingAndGlyphs">AUDUSD,M5</text>
<text x="443" y="893" textLength="63" lengthAdjust="spacingAndGlyphs">EURUSD,M5</text>
<text x="528.5" y="893" textLength="63" lengthAdjust="spacingAndGlyphs">EURUSD,M5</text>
<text x="700" y="893" textLength="72" lengthAdjust="spacingAndGlyphs">AUDUSD,M15</text>
<text x="795.5" y="893" textLength="63" lengthAdjust="spacingAndGlyphs">EURUSD,M5</text>
<text x="882" y="893" textLength="57" lengthAdjust="spacingAndGlyphs">$US500,M5</text>
<text x="961" y="893" textLength="54" lengthAdjust="spacingAndGlyphs">$USDX,M5</text>
<text x="1039" y="893" textLength="70" lengthAdjust="spacingAndGlyphs">EURGBP,M15</text>
<text x="1131" y="893" textLength="62.6" lengthAdjust="spacingAndGlyphs">EURUSD,M1</text>
<text x="1217" y="893" textLength="64.5" lengthAdjust="spacingAndGlyphs">XAUUSD,M5</text>
<text x="1305" y="893" textLength="62" lengthAdjust="spacingAndGlyphs">XAGUSD,H1</text>
</g>
<text x="613.6" y="892" font-size="12" textLength="63" lengthAdjust="spacingAndGlyphs">EURGBP,M5</text>
<path d="M92.5 883V896M169.5 883V896M258.5 883V896M343.5 883V896M433.5 883V896M517.5 883V896M784.5 883V896M869.5 883V896M950.5 883V896M1027.5 883V896M1120.5 883V896M1206.5 883V896M1294.5 883V896" stroke="#b0b0b0" fill="none"/>
<path d="M1880 886.5L1877.5 889L1880 891.5M1899.5 886.5L1902 889L1899.5 891.5" stroke="#b0b0b0" fill="none"/>
<rect x="8" y="901" width="1909" height="21" fill="#f0f0f0"/>
<g clip-path="url(#cs)"><text x="6" y="916" font-size="12" textLength="173" lengthAdjust="spacingAndGlyphs">Для вызова справки нажмите F1</text></g>
<path d="M1204.5 902V922M1350.5 902V922M1448.5 902V922M1519.5 902V922M1590.5 902V922M1657.5 902V922M1728.5 902V922M1796.5 902V922" stroke="#a8a8a8" fill="none"/>
<text x="1211" y="916" font-size="12" textLength="36.6" lengthAdjust="spacingAndGlyphs">Default</text>
<path d="M1800.5 917V913M1803.5 917V911M1806.5 917V908.5M1809.5 917V906M1812.5 917V904" stroke="#12a012" stroke-width="1.2" fill="none"/>
<text x="1819" y="916" font-size="12" textLength="68.5" lengthAdjust="spacingAndGlyphs">27.3 / 0.2 Mb</text>
<path d="M1906 919h1.5M1909 919h1.5M1912 919h1.5M1909 916h1.5M1912 916h1.5M1912 913h1.5" stroke="#b8b8b8" fill="none"/>
</svg>
</body></html>
